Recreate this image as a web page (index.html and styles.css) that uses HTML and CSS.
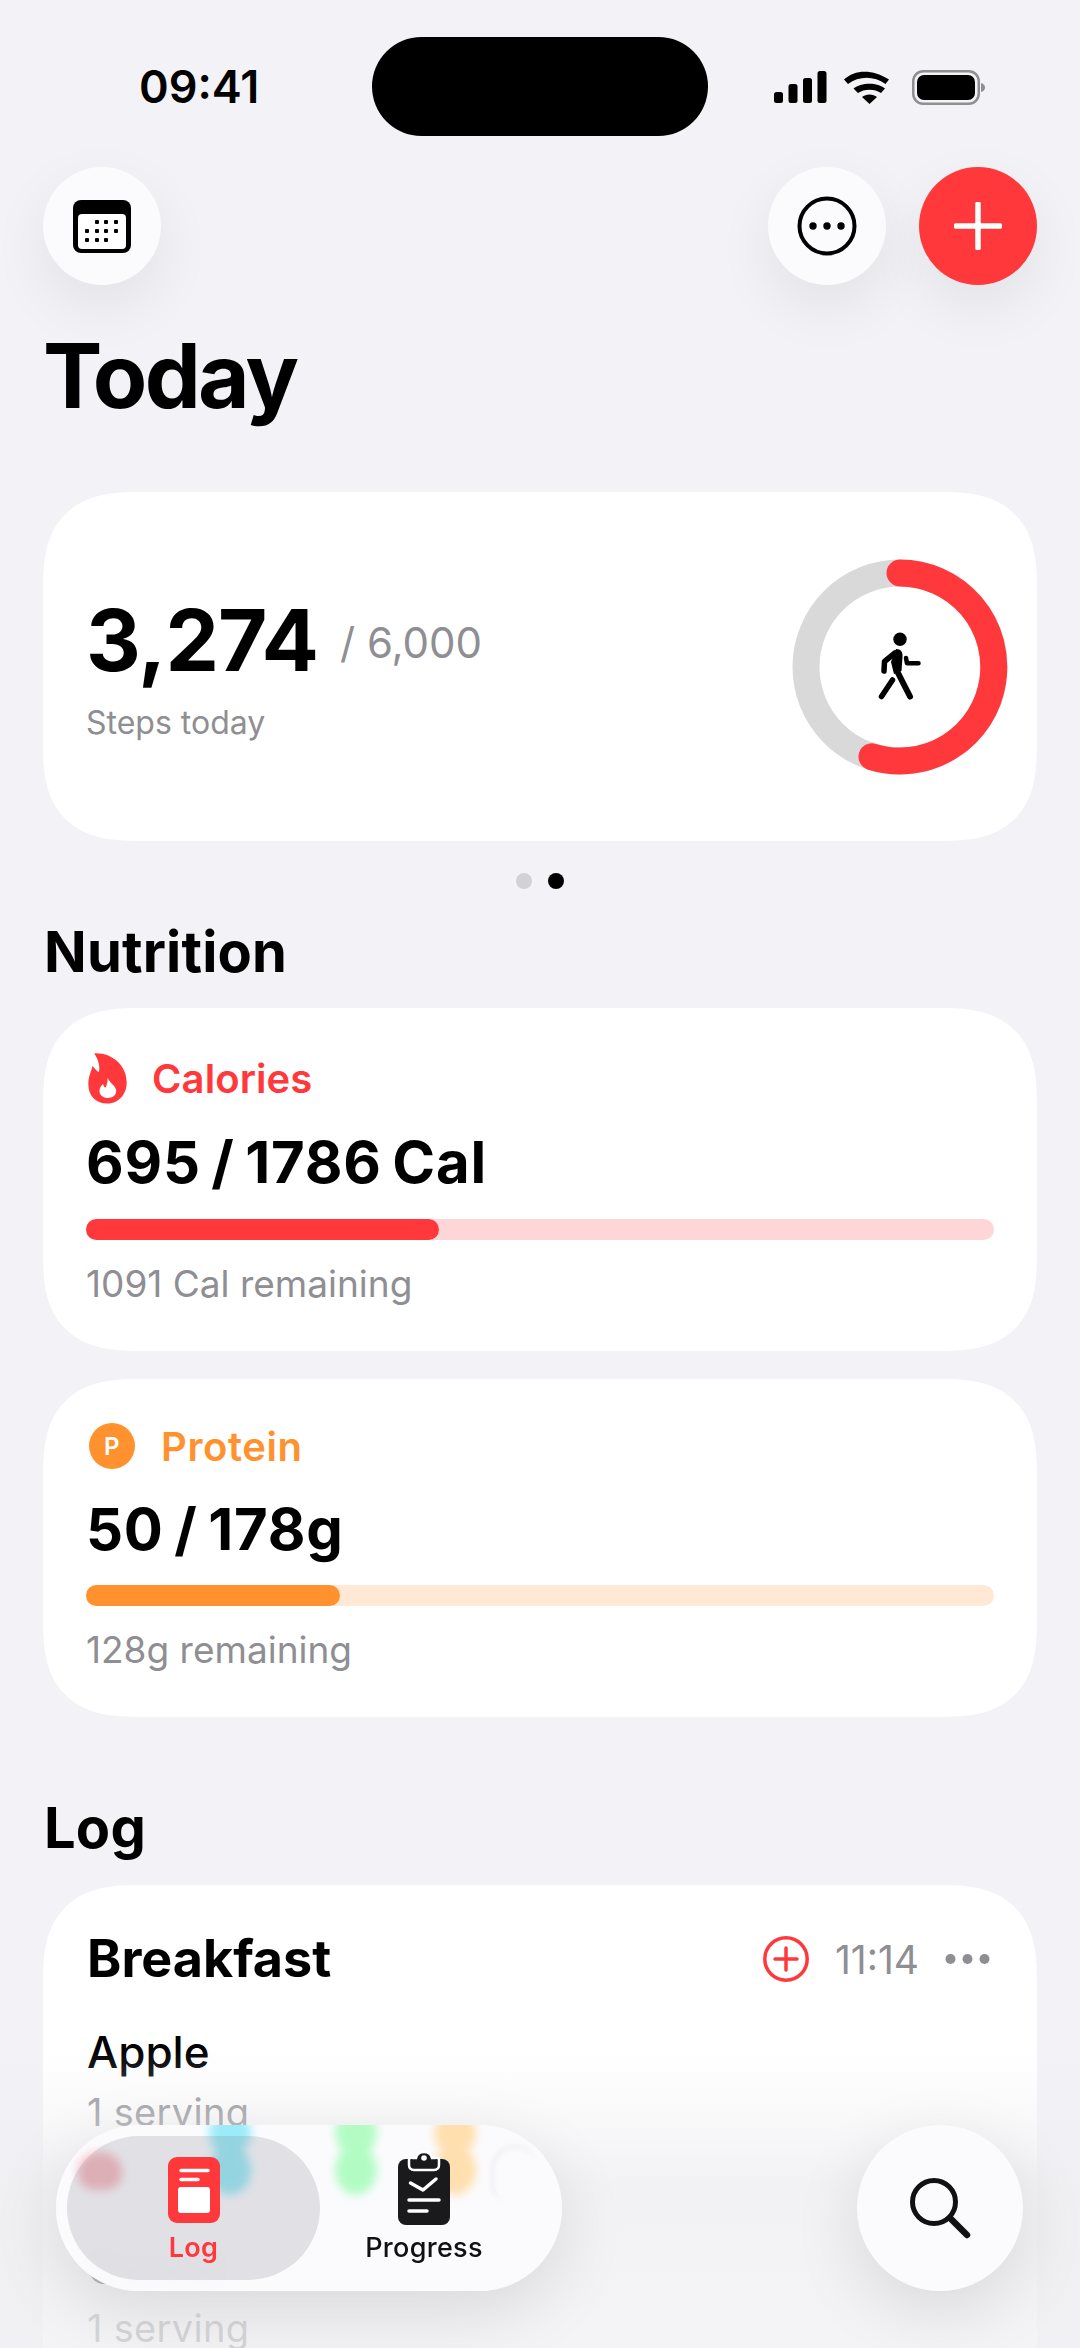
FILE: index.html
```html
<!DOCTYPE html>
<html lang="en">
<head>
    <meta charset="UTF-8">
    <meta name="viewport" content="width=device-width, initial-scale=1.0">
    <title>Today</title>
    <link rel="stylesheet" href="styles.css">
</head>
<body>
<div class="screen">
    <div class="status-bar">
        <div class="time">09:41</div>
        <div class="island"></div>
        <svg class="status-icons" width="212" height="36" viewBox="0 0 212 36">
            <rect x="0" y="22" width="9" height="11" rx="2.5"/>
            <rect x="14.5" y="14" width="9" height="19" rx="2.5"/>
            <rect x="29" y="8" width="9" height="25" rx="2.5"/>
            <rect x="43.500" y="1" width="9" height="32" rx="2.5"/>
            <path d="M73 9.500C84 -1 102 -1 118 9.500L114.500 14C103 5.500 88 5.500 77 14Z" transform="translate(-3 0) scale(1 1)"/>
            <path d="M79.500 18.500C87 12 104 12 111 18.500L107 23C101 18.500 90 18.500 84 23Z"/>
            <path d="M88 27C92 23.500 99 23.500 103 27L95.500 34Z"/>
            <rect x="139.250" y="1.250" width="65.500" height="32.500" rx="10" fill="none" stroke="#8e8e93" stroke-width="2.500"/>
            <rect x="143" y="5" width="58" height="25" rx="7"/>
            <path d="M207 13C210 14 211 15.500 211 17.500C211 19.500 210 21 207 22Z" fill="#8e8e93"/>
        </svg>
    </div>

    <div class="toolbar">
        <div class="round-btn">
            <svg width="58" height="53" viewBox="0 0 58 53">
                <rect width="58" height="53" rx="8"/>
                <rect x="5" y="14" width="48" height="35" rx="4" fill="#fff"/>
                <g>
                    <rect x="22" y="20" width="4" height="4" rx="1"/><rect x="31" y="20" width="4" height="4" rx="1"/><rect x="41" y="20" width="4" height="4" rx="1"/>
                    <rect x="12" y="29" width="4" height="4" rx="1"/><rect x="22" y="29" width="4" height="4" rx="1"/><rect x="31" y="29" width="4" height="4" rx="1"/><rect x="41" y="29" width="4" height="4" rx="1"/>
                    <rect x="12" y="38" width="4" height="4" rx="1"/><rect x="22" y="38" width="4" height="4" rx="1"/><rect x="31" y="38" width="4" height="4" rx="1"/>
                </g>
            </svg>
        </div>
        <div class="toolbar-right">
            <div class="round-btn">
                <svg width="60" height="60" viewBox="0 0 60 60">
                    <circle cx="30" cy="30" r="27.500" fill="none" stroke="#000" stroke-width="4"/>
                    <circle cx="16" cy="30" r="3.700"/><circle cx="30" cy="30" r="3.700"/><circle cx="44" cy="30" r="3.700"/>
                </svg>
            </div>
            <div class="round-btn round-btn-red">
                <svg width="48" height="48" viewBox="0 0 48 48">
                    <path d="M24 2V46M2 24H46" stroke="#fff" stroke-width="5.500" stroke-linecap="round"/>
                </svg>
            </div>
        </div>
    </div>

    <h1 class="page-title">Today</h1>

    <div class="card steps-card">
        <div class="steps-text">
            <div class="steps-row"><span class="steps-count">3,274</span><span class="steps-goal">/ 6,000</span></div>
            <div class="steps-label">Steps today</div>
        </div>
        <svg class="steps-ring" width="220" height="220" viewBox="0 0 220 220">
            <circle cx="110" cy="110" r="94" fill="none" stroke="#d9d9d9" stroke-width="27"/>
            <path d="M110 16A94 94 0 1 1 82 199.800" fill="none" stroke="#ff383c" stroke-width="27" stroke-linecap="round"/>
            <circle cx="110" cy="82.300" r="6.700"/>
            <path d="M105 96L94.500 104.500L94 114" fill="none" stroke="#000" stroke-width="5.500" stroke-linecap="round" stroke-linejoin="round"/>
            <path d="M106 92C111 92 113 95 112.500 100L111.500 114L104 117L101 105Z"/>
            <path d="M106 112L120 139.500" fill="none" stroke="#000" stroke-width="6" stroke-linecap="round"/>
            <path d="M102.500 123L91.500 139.500" fill="none" stroke="#000" stroke-width="5.500" stroke-linecap="round"/>
            <path d="M116 101L117 106.300H128.500" fill="none" stroke="#000" stroke-width="4.500" stroke-linecap="round" stroke-linejoin="round"/>
        </svg>
    </div>

    <div class="pager">
        <span class="pager-dot"></span>
        <span class="pager-dot pager-dot-on"></span>
    </div>

    <h2 class="section-title nutrition-title">Nutrition</h2>

    <div class="card macro-card">
        <div class="macro-label macro-red">
            <svg width="43" height="53" viewBox="252 158 122 152">
                <path fill="#ff383c" d="M275 162C330 160 368 200 368 245C368 285 340 306 313 306C280 306 258 285 258 250C258 228 266 215 270 198C276 204 282 212 288 216C293 196 285 178 275 162Z"/>
                <path fill="#fff" d="M313 232C322 250 338 256 338 270C338 283 326 290 314 290C300 290 290 282 290 270C290 260 296 254 300 250C302 257 305 260 308 260C312 250 314 242 313 232Z"/>
            </svg>
            <span>Calories</span>
        </div>
        <div class="macro-value">695 / 1786 Cal</div>
        <div class="bar bar-red"><div class="bar-fill" style="width: 38.9%"></div></div>
        <div class="macro-left">1091 Cal remaining</div>
    </div>

    <div class="card macro-card protein-card">
        <div class="macro-label macro-orange">
            <span class="p-badge">P</span>
            <span>Protein</span>
        </div>
        <div class="macro-value">50 / 178g</div>
        <div class="bar bar-orange"><div class="bar-fill" style="width: 28%"></div></div>
        <div class="macro-left">128g remaining</div>
    </div>

    <h2 class="section-title log-title">Log</h2>

    <div class="card log-card">
        <div class="meal-head">
            <div class="meal-name">Breakfast</div>
            <div class="meal-meta">
                <svg width="46" height="46" viewBox="0 0 46 46">
                    <circle cx="23" cy="23" r="21.200" fill="none" stroke="#ff383c" stroke-width="3.500"/>
                    <path d="M23 12V34M12 23H34" stroke="#ff383c" stroke-width="3.500" stroke-linecap="round"/>
                </svg>
                <span class="meal-time">11:14</span>
                <svg width="45" height="12" viewBox="0 0 45 12" fill="#8e8e93">
                    <circle cx="5.500" cy="6" r="5"/><circle cx="22.500" cy="6" r="5"/><circle cx="39.500" cy="6" r="5"/>
                </svg>
            </div>
        </div>
        <div class="food">
            <div class="food-name">Apple</div>
            <div class="food-serving">1 serving</div>
        </div>
        <div class="food food-second">
            <div class="food-name">Cereal</div>
            <div class="food-serving">1 serving</div>
        </div>
    </div>

    <div class="bottom-fade"></div>

    <div class="tab-bar">
        <span class="blob blob-pink"></span>
        <span class="blob blob-cyan"></span>
        <span class="blob blob-green"></span>
        <span class="blob blob-orange"></span>
        <span class="blob-arc"></span>
        <div class="tab tab-active">
            <svg width="52" height="66" viewBox="0 0 52 66">
                <rect width="52" height="66" rx="9" fill="#ff383c"/>
                <path d="M13 13.500H40M13 22.500H30" stroke="#fff" stroke-width="3.500" stroke-linecap="round"/>
                <rect x="10" y="30" width="32" height="26" rx="3" fill="#fff"/>
            </svg>
            <span>Log</span>
        </div>
        <div class="tab">
            <svg width="52" height="74" viewBox="0 0 52 74">
                <rect y="8" width="52" height="66" rx="8" fill="#1a1a1c"/>
                <path d="M11 9C11 6 13 7 18 7C19 3 22 1 26 1C30 1 33 3 34 7C39 7 41 6 41 9V14C41 17 39 19 36 19H16C13 19 11 17 11 14Z" fill="#1a1a1c" stroke="#fff" stroke-width="2.500"/>
                <circle cx="26" cy="7" r="2.800" fill="#fff"/>
                <path d="M12.500 32L25 39L38 28" fill="none" stroke="#fff" stroke-width="3.500" stroke-linecap="round" stroke-linejoin="round"/>
                <path d="M11 49H41M11 60H29" stroke="#fff" stroke-width="3.500" stroke-linecap="round"/>
            </svg>
            <span>Progress</span>
        </div>
    </div>

    <div class="search-btn">
        <svg width="62" height="62" viewBox="0 0 62 62">
            <circle cx="25" cy="25" r="21.500" fill="none" stroke="#111" stroke-width="5"/>
            <path d="M41 41L58 58" stroke="#111" stroke-width="6.500" stroke-linecap="round"/>
        </svg>
    </div>
</div>
</body>
</html>
```

FILE: styles.css
```css
* {
    box-sizing: border-box;
}

body {
    margin: 0;
    background-color: #f2f2f7;
    font-family: Inter, "Liberation Sans", sans-serif;
    color: #000;
}

.screen {
    position: relative;
    width: 1080px;
    height: 2348px;
    padding: 0 43px;
    overflow: hidden;
}

/* status bar */
.status-bar {
    display: flex;
    height: 167px;
    margin: 0 -43px;
    padding-top: 37px;
}

.time {
    width: 372px;
    padding: 20px 0 0 139px;
    font-size: 45px;
    font-weight: 600;
    line-height: 60px;
}

.island {
    width: 336px;
    height: 99px;
    border-radius: 50px;
    background-color: #000;
}

.status-icons {
    margin: 33px 0 0 66px;
}

/* top buttons */
.toolbar {
    display: flex;
    justify-content: space-between;
}

.toolbar-right {
    display: flex;
    gap: 33px;
}

.round-btn {
    display: flex;
    align-items: center;
    justify-content: center;
    width: 118px;
    height: 118px;
    border-radius: 50%;
    background-color: #fbfbfe;
    box-shadow: 0 22px 60px rgba(0, 0, 0, 0.07);
}

.round-btn-red {
    background-color: #ff383c;
}

.page-title {
    margin: 41px 0 66px 0;
    font-size: 89px;
    font-weight: 700;
    line-height: 100px;
    letter-spacing: -2.7px;
}

.card {
    border-radius: 96px;
    corner-shape: superellipse(1.4);
    background-color: #fff;
}

/* steps */
.steps-card {
    display: flex;
    align-items: center;
    justify-content: space-between;
    height: 349px;
    padding: 0 27px 0 43px;
}

.steps-text {
    padding-top: 5px;
}

.steps-row {
    display: flex;
    align-items: center;
    gap: 22px;
}

.steps-count {
    font-size: 85px;
    font-weight: 700;
    line-height: 90px;
    letter-spacing: -1px;
}

.steps-goal {
    padding-top: 4px;
    font-size: 42px;
    color: #8e8e93;
}

.steps-label {
    margin-top: 17px;
    font-size: 32px;
    line-height: 40px;
    color: #8e8e93;
}

.pager {
    display: flex;
    justify-content: center;
    gap: 16px;
    margin: 32px 0 0;
}

.pager-dot {
    width: 16px;
    height: 16px;
    border-radius: 50%;
    background-color: #d1d1d6;
}

.pager-dot-on {
    background-color: #000;
}

.section-title {
    margin: 0 0 24px 1px;
    font-size: 56px;
    font-weight: 700;
    line-height: 64px;
    letter-spacing: 0.2px;
}

.nutrition-title {
    margin-top: 31px;
}

.log-title {
    margin-top: 79px;
    margin-bottom: 25px;
}

/* nutrition cards */
.macro-card {
    height: 343px;
    padding: 46px 43px 0;
}

.protein-card {
    height: 338px;
    margin-top: 28px;
    padding-top: 43px;
}

.macro-label {
    display: flex;
    align-items: center;
    gap: 23px;
    height: 48px;
    font-size: 40px;
    font-weight: 600;
    letter-spacing: 0.1px;
}

.macro-red {
    color: #ff383c;
}

.macro-orange {
    gap: 26px;
    color: #ff922e;
    letter-spacing: 0.6px;
}

.p-badge {
    display: flex;
    align-items: center;
    justify-content: center;
    width: 46px;
    height: 46px;
    margin-left: 3px;
    border-radius: 50%;
    background-color: #ff922e;
    color: #fff;
    font-size: 24px;
}

.macro-value {
    margin-top: 28px;
    font-size: 58px;
    font-weight: 700;
    line-height: 64px;
    word-spacing: -4px;
    letter-spacing: 0.8px;
}

.protein-card .macro-value {
    margin-top: 27px;
}

.bar {
    height: 21px;
    margin-top: 25px;
    border-radius: 11px;
}

.protein-card .bar {
    margin-top: 24px;
}

.bar-fill {
    height: 100%;
    border-radius: 11px;
}

.bar-red {
    background-color: #ffd6d7;
}

.bar-red .bar-fill {
    background-color: #ff383c;
}

.bar-orange {
    background-color: #ffe8d5;
}

.bar-orange .bar-fill {
    background-color: #ff922e;
}

.macro-left {
    margin-top: 22px;
    font-size: 37px;
    line-height: 44px;
    color: #8e8e93;
}

/* log */
.log-card {
    height: 700px;
    padding: 44px 47px 0 44px;
}

.meal-head {
    display: flex;
    align-items: center;
    justify-content: space-between;
    height: 60px;
}

.meal-name {
    font-size: 52px;
    font-weight: 700;
    line-height: 60px;
}

.meal-meta {
    display: flex;
    align-items: center;
    gap: 26px;
}

.meal-time {
    font-size: 39px;
    color: #8e8e93;
}

.food {
    margin-top: 38px;
}

.food-second {
    margin-top: 109px;
}

.food-name {
    font-size: 44px;
    font-weight: 500;
    line-height: 50px;
}

.food-serving {
    margin-top: 13px;
    font-size: 38px;
    line-height: 44px;
    letter-spacing: 0.3px;
    color: #8e8e93;
}

/* bottom overlay */
.bottom-fade {
    position: absolute;
    left: 0;
    right: 0;
    bottom: 0;
    height: 300px;
    background: linear-gradient(rgba(240, 240, 243, 0), rgba(240, 240, 243, 0.33) 20%, rgba(240, 240, 243, 0.85) 45%, rgba(240, 240, 243, 0.72));
}

.tab-bar {
    position: absolute;
    left: 56px;
    top: 2125px;
    display: flex;
    align-items: center;
    width: 506px;
    height: 166px;
    padding: 0 11px;
    overflow: hidden;
    border-radius: 83px;
    background-color: rgba(251, 251, 254, 0.94);
    box-shadow: 0 20px 70px rgba(0, 0, 0, 0.11);
    backdrop-filter: blur(6px);
}

.tab {
    position: relative;
    display: flex;
    flex: none;
    flex-direction: column;
    align-items: center;
    justify-content: flex-end;
    width: 208px;
    height: 144px;
    padding-bottom: 17px;
    gap: 8px;
    font-size: 27px;
    font-weight: 500;
    line-height: 30px;
    letter-spacing: 0.3px;
    color: #111;
    white-space: nowrap;
}

.tab svg {
    flex: none;
}

.tab-active {
    width: 253px;
    border-radius: 72px;
    background-color: rgba(120, 120, 128, 0.2);
    color: #ff383c;
    font-weight: 600;
}

.tab-active svg {
    margin-bottom: 2px;
}

/* blurred badges showing through the glass bar */
.blob {
    position: absolute;
    top: 0;
    width: 42px;
    height: 70px;
    filter: blur(5px);
}

.blob::before,
.blob::after {
    content: "";
    position: absolute;
    left: 0;
    width: 42px;
    border-radius: 50%;
    background-color: var(--blob);
}

.blob::before {
    top: -14px;
    height: 44px;
}

.blob::after {
    top: 20px;
    height: 50px;
}

.blob-pink {
    left: 22px;
    top: 27px;
    width: 44px;
    height: 38px;
    border-radius: 50% 50% 40% 40%;
    background-color: #f6bcc4;
}

.blob-pink::before,
.blob-pink::after {
    display: none;
}

.blob-cyan {
    --blob: #9cebf8;
    left: 153px;
}

.blob-green {
    --blob: #b2fcc4;
    left: 279px;
}

.blob-orange {
    --blob: #ffdfae;
    left: 378px;
}

.blob-arc {
    position: absolute;
    left: 435px;
    top: 20px;
    width: 48px;
    height: 56px;
    border: solid #eeeef3;
    border-width: 3px 0 0 3px;
    border-radius: 30px 30px 0 20px;
    filter: blur(2px);
}

.search-btn {
    position: absolute;
    left: 857px;
    top: 2125px;
    display: flex;
    align-items: center;
    justify-content: center;
    width: 166px;
    height: 166px;
    border-radius: 50%;
    background-color: #fbfbfe;
    box-shadow: 0 20px 70px rgba(0, 0, 0, 0.11);
}
```
